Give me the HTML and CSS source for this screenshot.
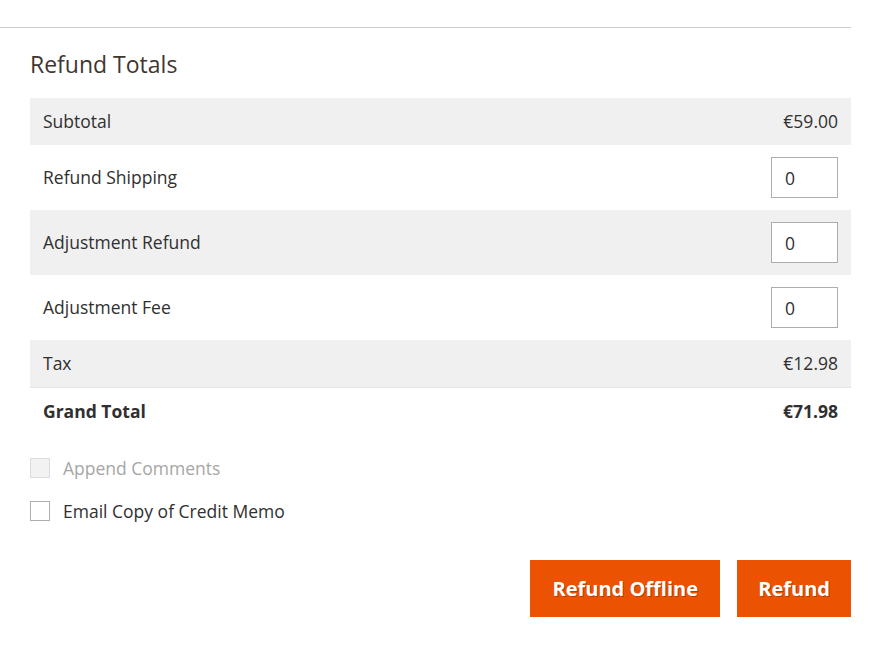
FILE: index.html
```html
<!DOCTYPE html>
<html>
<head>
<meta charset="utf-8">
<link rel="stylesheet" href="styles.css">
</head>
<body>
<div class="page">
  <section class="section">
    <h2 class="section-title">Refund Totals</h2>
    <table class="totals">
      <tr class="shade">
        <td class="label">Subtotal</td>
        <td class="value">€59.00</td>
      </tr>
      <tr>
        <td class="label">Refund Shipping</td>
        <td class="value"><input class="field" type="text" value="0"></td>
      </tr>
      <tr class="shade">
        <td class="label">Adjustment Refund</td>
        <td class="value"><input class="field" type="text" value="0"></td>
      </tr>
      <tr>
        <td class="label">Adjustment Fee</td>
        <td class="value"><input class="field" type="text" value="0"></td>
      </tr>
      <tr class="shade">
        <td class="label">Tax</td>
        <td class="value">€12.98</td>
      </tr>
      <tr class="grand">
        <td class="label">Grand Total</td>
        <td class="value">€71.98</td>
      </tr>
    </table>
    <div class="options">
      <label class="check disabled"><span class="box"></span>Append Comments</label>
      <label class="check"><span class="box"></span>Email Copy of Credit Memo</label>
    </div>
    <div class="actions">
      <button class="btn wide">Refund Offline</button>
      <button class="btn">Refund</button>
    </div>
  </section>
</div>
</body>
</html>
```
FILE: styles.css
```css
html, body {
  margin: 0;
  padding: 0;
  background: #fff;
}
body {
  font-family: "Open Sans", "Liberation Sans", sans-serif;
  color: #303030;
}
.page {
  width: 851px;
  padding-top: 27px;
}
.section {
  border-top: 1px solid #cccccc;
  padding-left: 30px;
}
.section-title {
  margin: 0;
  padding-top: 21px;
  height: 49px;
  font-size: 23px;
  font-weight: 400;
  line-height: 30px;
  color: #41362f;
}
.totals {
  width: 100%;
  border-collapse: collapse;
  font-size: 17.5px;
}
.totals td {
  padding: 12px 13px;
  line-height: 23px;
  height: 23px;
}
.totals tr.shade td {
  background: #f0f0f0;
}
.totals .value {
  text-align: right;
}
.totals .field {
  box-sizing: border-box;
  width: 67px;
  height: 41px;
  border: 1px solid #adadad;
  padding: 0 13px;
  font-family: inherit;
  font-size: 17.5px;
  color: #303030;
  vertical-align: middle;
  display: inline-block;
  margin: 0;
}
.totals tr.grand td {
  border-top: 1px solid #e3e3e3;
  font-weight: 700;
  padding-top: 12px;
  padding-bottom: 12px;
}
.options {
  padding-top: 22px;
  display: flex;
  flex-direction: column;
  gap: 21px;
}
.check {
  display: flex;
  align-items: center;
  gap: 13px;
  font-size: 17.5px;
  line-height: 22px;
  color: #303030;
}
.check .box {
  box-sizing: border-box;
  width: 20px;
  height: 20px;
  border: 1px solid #adadad;
  background: #fff;
}
.check.disabled {
  color: #a6a6a6;
}
.check.disabled .box {
  border-color: #dcdcdc;
  background: #f2f2f2;
}
.actions {
  display: flex;
  justify-content: flex-end;
  gap: 17px;
  padding-top: 38px;
}
.btn {
  height: 57px;
  padding: 0 21px;
  border: none;
  background: #eb5202;
  color: #fff;
  font-family: "Open Sans", "Liberation Sans", sans-serif;
  font-size: 20px;
  font-weight: 700;
  text-shadow: 1px 1px 0 rgba(0, 0, 0, 0.25);
}
.btn.wide {
  width: 190px;
}
```
